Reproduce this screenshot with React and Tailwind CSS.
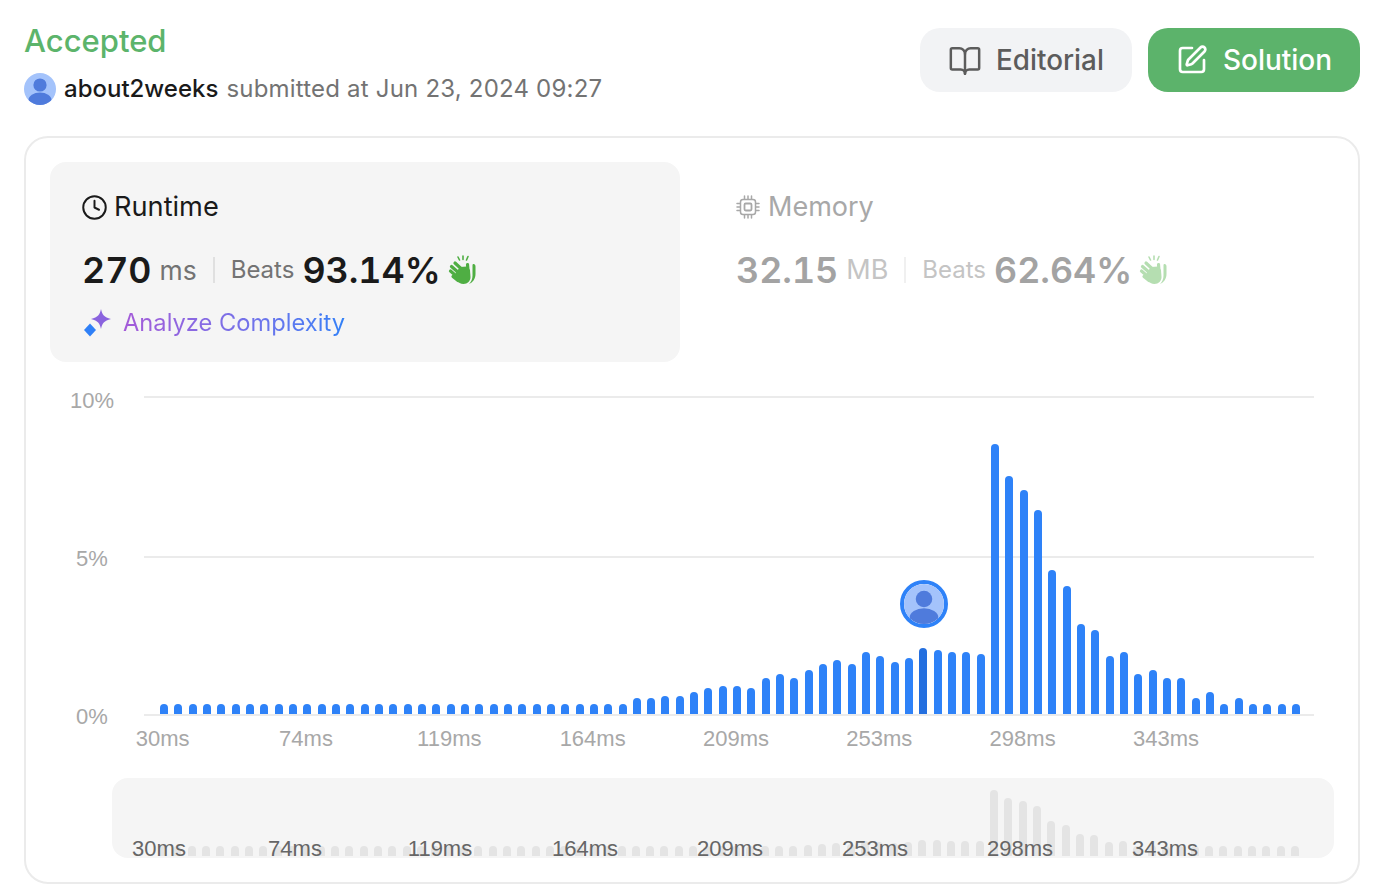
import { BookOpen, Clock, SquarePen } from 'lucide-react';

const smallBars = Array(31).fill(10);
// bar heights read off the distribution, px above the axis
const heights = [
  ...smallBars,
  10, 10, 16, 16, 18, 18, 22, 26, 28, 28, 26, 36, 40, 36, 44, 50, 54, 50, 62, 58, 52, 56, 66, 64, 62, 62, 60,
  270, 238, 224, 204, 144, 128, 90, 84, 58, 62, 40, 44, 36, 36, 16, 22, 10, 16, 10, 10, 10, 10,
];
const miniHeights = heights.map((h) => Math.max(10, Math.round(h * 0.245)));
const labels = ['30ms', '74ms', '119ms', '164ms', '209ms', '253ms', '298ms', '343ms'];
const USER_BAR = 53;

function Avatar({ className }) {
  return (
    <svg viewBox="0 0 32 32" className={className}>
      <defs>
        <clipPath id="avatar-clip">
          <circle cx="16" cy="16" r="16" />
        </clipPath>
      </defs>
      <g clipPath="url(#avatar-clip)">
        <rect width="32" height="32" fill="#a4c3fb" />
        <circle cx="16" cy="12" r="6.6" fill="#4f7bdc" />
        <ellipse cx="16" cy="27" rx="11.5" ry="7.6" fill="#4f7bdc" />
      </g>
    </svg>
  );
}

function Clap({ className, muted }) {
  const fill = muted ? '#b5deb1' : '#4fae43';
  return (
    <svg viewBox="0 0 30 30" className={className} fill="none">
      <path d="M15 1v3.500M10 2l1.500 3M20 1.500L18.500 5" stroke={fill} strokeWidth="1.600" strokeLinecap="round" />
      <path
        d="M7 8l7 6.500M3.500 11.500l8 7M2.500 16l7.500 6.500M5 21.500l5 4M19.500 9.500l.5 6"
        stroke={fill}
        strokeWidth="3.200"
        strokeLinecap="round"
      />
      <path d="M12 12l7-.5 3 3.500.5 7c0 4-3 7-7 7-3 0-5-1.500-7-3.500l-1-7.500z" fill={fill} />
      <path d="M25.500 9c1.300 0 2 1 2 2.500v7.500c0 4.500-2.500 8.500-6.500 10 2.300-2 3.500-5 3.500-8.500v-10c0-1 .2-1.500 1-1.500z" fill={fill} />
    </svg>
  );
}

function Sparkle({ className }) {
  return (
    <svg viewBox="0 0 28 28" className={className}>
      <path d="M17 0c1.200 6 3 8 10 10-7 2-8.800 4-10 10-1.200-6-3-8-10-10 7-2 8.800-4 10-10z" fill="#8a63de" />
      <path d="M6 14.500l6 6.500-6 6.500L0 21z" fill="#2f80f7" />
    </svg>
  );
}

function Chip({ className }) {
  return (
    <svg viewBox="0 0 24 24" className={className} fill="none" stroke="#a8a8a8" strokeWidth="1.500">
      <rect x="4.500" y="4.500" width="15" height="15" rx="2.500" />
      <rect x="8.500" y="8.500" width="7" height="7" rx="1.200" strokeWidth="1.800" />
      <path d="M8.500 1v3M12 1v3M15.500 1v3M8.500 20v3M12 20v3M15.500 20v3M1 8.500h3M1 12h3M1 15.500h3M20 8.500h3M20 12h3M20 15.500h3" strokeLinecap="round" />
    </svg>
  );
}

function GridLine({ label, labelClass }) {
  return (
    <div className="flex h-[2px] items-center">
      <span className={`w-[84px] shrink-0 text-center text-[22px] text-[#a8a8a8] ${labelClass}`}>{label}</span>
      <div className="ml-[10px] h-[2px] w-[1170px] bg-[#ebebeb]" />
    </div>
  );
}

export default function App() {
  return (
    <div className="h-[894px] w-[1386px] overflow-hidden bg-white pl-6 pr-[26px] pt-[19px] font-['Inter',sans-serif]">
      <div className="flex h-[117px] items-start justify-between">
        <div>
          <div className="text-[31px] font-medium leading-[44px] text-[#5cb46b]">Accepted</div>
          <div className="mt-[10px] flex items-center">
            <Avatar className="h-8 w-8" />
            <span className="ml-2 text-[24px] font-medium leading-8 text-[#1a1a1a]">about2weeks</span>
            <span className="ml-2 text-[24px] leading-8 tracking-[0.2px] text-[#737373]">submitted at Jun 23, 2024 09:27</span>
          </div>
        </div>
        <div className="mt-[9px] flex gap-4">
          <button className="flex h-16 w-[212px] items-center justify-center gap-[14px] rounded-[20px] bg-[#f2f3f5] pt-[1px] text-[27.8px] font-medium text-[#5c5c5c]">
            <BookOpen size={34} strokeWidth={1.75} />
            Editorial
          </button>
          <button className="flex h-16 w-[212px] items-center justify-center gap-[15px] rounded-[20px] bg-[#5cb36b] text-[28px] font-medium text-white">
            <SquarePen size={32} strokeWidth={2} />
            Solution
          </button>
        </div>
      </div>

      <div className="h-[748px] rounded-3xl border-2 border-[#ebebeb] px-6 pt-6">
        <div className="flex h-[200px]">
          <div className="w-[630px] rounded-2xl bg-[#f5f5f5] pl-[31px] pt-[29px]">
            <div className="flex items-center gap-[6px] text-[27.2px] leading-8 text-[#1a1a1a]">
              <Clock size={27} strokeWidth={1.75} />
              Runtime
            </div>
            <div className="ml-[1px] mt-[23px] flex items-center leading-[48px] tabular-nums">
              <span className="text-[35.8px] font-semibold text-[#1a1a1a]">270</span>
              <span className="ml-2 text-[26.5px] text-[#737373]">ms</span>
              <span className="mx-4 h-[26px] w-[2px] bg-[#e0e0e0]" />
              <span className="text-[24px] text-[#737373]">Beats</span>
              <span className="ml-2 text-[35.8px] font-semibold text-[#1a1a1a]">93.14%</span>
              <Clap className="ml-[7px] h-[30px] w-[30px]" />
            </div>
            <div className="ml-[3px] mt-[11px] flex items-center">
              <Sparkle className="h-7 w-7" />
              <span className="ml-[11px] bg-linear-to-r from-[#a45ad8] to-[#2f80f7] bg-clip-text text-[23.7px] leading-9 text-transparent">
                Analyze Complexity
              </span>
            </div>
          </div>
          <div className="ml-[56px] pt-[29px]">
            <div className="flex items-center gap-2 text-[27px] leading-8 text-[#a8a8a8]">
              <Chip className="h-6 w-6" />
              Memory
            </div>
            <div className="mt-[23px] flex items-center leading-[48px] tabular-nums">
              <span className="text-[35.8px] font-semibold text-[#a3a3a3]">32.15</span>
              <span className="ml-2 text-[27px] text-[#c4c4c4]">MB</span>
              <span className="mx-4 h-[26px] w-[2px] bg-[#f0f0f0]" />
              <span className="text-[24px] text-[#c4c4c4]">Beats</span>
              <span className="ml-2 text-[35.8px] font-semibold text-[#a3a3a3]">62.64%</span>
              <Clap muted className="ml-[7px] h-[30px] w-[30px]" />
            </div>
          </div>
        </div>

        {/* main distribution chart */}
        <div className="relative mt-[34px] h-[320px] font-['Liberation_Sans',sans-serif]">
          <GridLine label="10%" labelClass="mt-[6px]" />
          <div className="mt-[158px]">
            <GridLine label="5%" labelClass="mt-[2px]" />
          </div>
          <div className="mt-[156px]">
            <GridLine label="0%" labelClass="mt-[2px]" />
          </div>
          <div className="absolute bottom-[2px] left-[110px] flex items-end gap-[6.33px]">
            {heights.map((h, i) => (
              <div
                key={i}
                className={`w-2 rounded-t-[4px] ${i === USER_BAR ? 'bg-[#246fdf]' : 'bg-[#2e82f8]'}`}
                style={{ height: h }}
              />
            ))}
          </div>
          <div className="absolute left-[850px] top-[184px] h-12 w-12 rounded-full border-4 border-[#2e82f8] bg-white">
            <Avatar className="h-10 w-10" />
          </div>
        </div>
        <div className="ml-[41px] mt-[7px] flex font-['Liberation_Sans',sans-serif] text-[22px] leading-[32px] text-[#a8a8a8]">
          {labels.map((l) => (
            <span key={l} className="w-[143.33px] shrink-0 text-center">{l}</span>
          ))}
        </div>

        {/* range slider preview */}
        <div className="relative ml-[62px] mt-[23px] h-20 w-[1222px] rounded-2xl bg-[#f5f5f5] font-['Liberation_Sans',sans-serif]">
          <div className="absolute bottom-[2px] left-[47px] flex items-end gap-[6.33px]">
            {miniHeights.map((h, i) => (
              <div key={i} className="w-2 rounded-t-[4px] bg-[#e4e4e4]" style={{ height: h }} />
            ))}
          </div>
          <div className="absolute bottom-[-7px] left-[-34.5px] flex text-[22px] leading-[32px] text-[#666666]">
            {labels.map((l, i) => (
              <span key={l} className={`w-[145px] shrink-0 text-center ${i === 0 ? 'translate-x-[9px]' : ''}`}>{l}</span>
            ))}
          </div>
        </div>
      </div>
    </div>
  );
}
